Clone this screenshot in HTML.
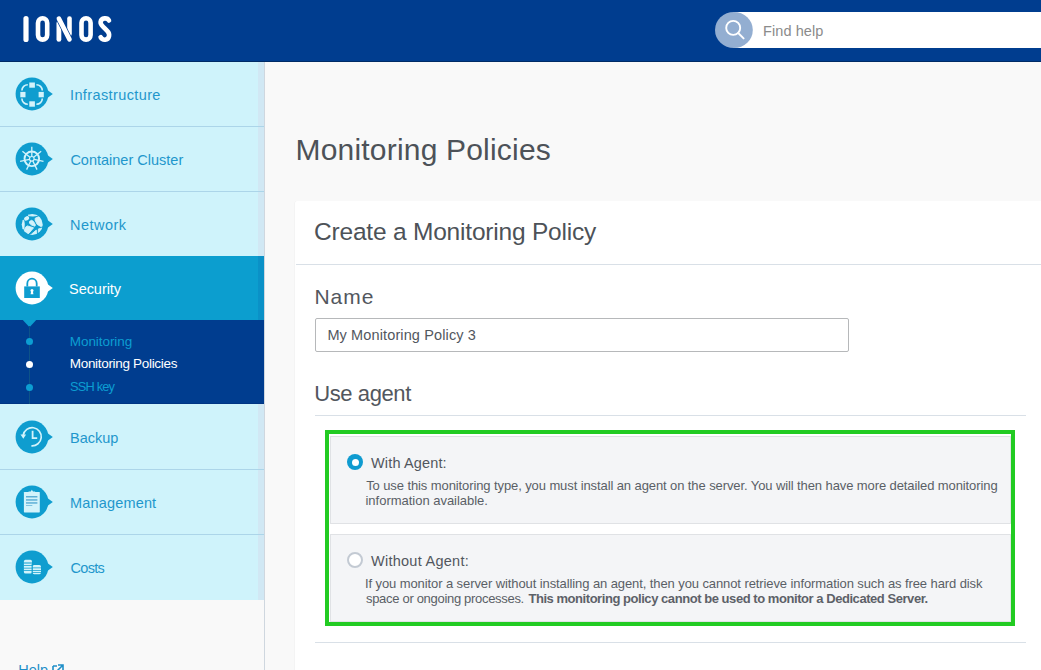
<!DOCTYPE html>
<html><head><meta charset="utf-8"><style>
*{margin:0;padding:0;box-sizing:border-box}
html,body{width:1041px;height:670px;overflow:hidden;background:#f9f9f9;font-family:"Liberation Sans",sans-serif}
.abs{position:absolute}
.t{position:absolute;white-space:nowrap}
.item{position:absolute;left:0;width:264px;background:#cff3fb}
.bb{position:absolute;left:0;width:264px;height:1px;background:#acd5e9}
.strip{position:absolute;left:258px;width:6px;background:#d1e8f4}
.ic{position:absolute;left:14px}
.hl{position:absolute;height:1px;background:#d9e0e7}
.panel{position:absolute;left:330px;width:681px;background:#f4f5f7;border:1px solid #e0e2e5}
</style></head><body>
<div class="abs" style="left:0;top:0;width:1041px;height:61px;background:#003d8f"></div>
<div class="abs" style="left:0;top:61px;width:1041px;height:1px;background:#002b66"></div>
<svg class="abs" style="left:20px;top:13px" width="96" height="32" viewBox="0 0 96 32">
  <g fill="none" stroke="#fff" stroke-linecap="round">
    <line x1="6" y1="5.6" x2="6" y2="26.4" stroke-width="5.2"/>
    <rect x="18" y="5.3" width="9.2" height="21.3" rx="4.6" stroke-width="4.6"/>
    <line x1="38.9" y1="10" x2="38.9" y2="26.4" stroke-width="4.8"/>
    <line x1="49.5" y1="5.6" x2="49.5" y2="21" stroke-width="4.6"/>
    <line x1="38.9" y1="5.6" x2="49.5" y2="26.4" stroke="#003d8f" stroke-width="6"/>
    <line x1="38.9" y1="5.6" x2="49.5" y2="26.4" stroke-width="4.6"/>
    <rect x="61.5" y="5.3" width="9.1" height="21.3" rx="4.55" stroke-width="4.6"/>
    <path d="M89 7.5 C87.5 4.5 81.2 4.4 80.6 9 C80.3 11.6 82 12.6 84.5 15.2 L87.4 18.2 C90.2 21 89.6 26.2 85.2 26.7 C82.8 26.9 81.4 25.7 80.6 24.2" stroke-width="4.6"/>
  </g>
</svg>
<div class="abs" style="left:733px;top:12px;width:308px;height:36px;background:#fff"></div>
<svg class="abs" style="left:715px;top:12px" width="38" height="36" viewBox="0 0 38 36"><ellipse cx="18.9" cy="18" rx="18.9" ry="18" fill="#93aed1"/><circle cx="18.2" cy="15.9" r="7" fill="none" stroke="#fff" stroke-width="1.9"/><line x1="23.2" y1="21" x2="28.6" y2="26.4" stroke="#fff" stroke-width="1.9" stroke-linecap="round"/></svg>

<div class="abs" style="left:264px;top:62px;width:1px;height:608px;background:#cfd7df"></div>
<div class="item" style="top:62px;height:194px"></div>
<div class="strip" style="top:62px;height:194px"></div>
<div class="bb" style="top:126px"></div>
<div class="bb" style="top:191px"></div>
<div class="abs" style="left:0;top:256px;width:258px;height:64px;background:#0c9ecf"></div>
<div class="abs" style="left:258px;top:256px;width:6px;height:64px;background:#0b91c7"></div>
<div class="abs" style="left:0;top:320px;width:264px;height:84px;background:#003d8f"></div>
<div class="abs" style="left:0;top:403px;width:264px;height:1px;background:#003583"></div>
<svg class="abs" style="left:22px;top:320px" width="15" height="9" viewBox="0 0 15 9"><path d="M0.8 0 L14.2 0 L7.5 7.2 Z" fill="#0c9ecf"/></svg>
<div class="abs" style="left:29px;top:326px;width:1px;height:78px;background:#0d5388"></div>
<div class="abs" style="left:25.9px;top:338.1px;width:7px;height:7px;border-radius:50%;background:#0c9ed2"></div>
<div class="abs" style="left:25.9px;top:361.1px;width:7px;height:7px;border-radius:50%;background:#fff"></div>
<div class="abs" style="left:25.9px;top:383.9px;width:7px;height:7px;border-radius:50%;background:#0c9ed2"></div>
<div class="item" style="top:404px;height:196px"></div>
<div class="strip" style="top:404px;height:196px"></div>
<div class="bb" style="top:469px"></div>
<div class="bb" style="top:534px"></div>
<svg class="ic" style="top:76px" width="40" height="36" viewBox="0 0 40 36"><circle cx="18" cy="18" r="16.4" fill="#0f9dcf"/><path d="M32.6 13.6 L38.8 18 L32.6 22.4 Z" fill="#0f9dcf"/>
   <g fill="none" stroke="#d3f3fb" stroke-width="1.6">
     <path d="M7.9 14.6 A5.9 5.9 0 0 1 13.8 8.7"/>
     <path d="M22.4 8.7 A5.9 5.9 0 0 1 28.3 14.6"/>
     <path d="M28.3 22.4 A5.9 5.9 0 0 1 22.4 28.3"/>
     <path d="M13.8 28.3 A5.9 5.9 0 0 1 7.9 22.4"/>
   </g>
   <g fill="#d3f3fb">
     <rect x="15.3" y="6.5" width="5.6" height="5.2"/>
     <rect x="6.3" y="15.9" width="5.2" height="5.4"/>
     <rect x="24.6" y="15.9" width="5.2" height="5.4"/>
     <rect x="15.3" y="25.3" width="5.6" height="5.4"/>
   </g></svg>
<svg class="ic" style="top:141px" width="40" height="36" viewBox="0 0 40 36"><circle cx="18" cy="18" r="16.4" fill="#0f9dcf"/><path d="M32.6 13.6 L38.8 18 L32.6 22.4 Z" fill="#0f9dcf"/>
   <circle cx="17.8" cy="17.8" r="7.3" fill="none" stroke="#d3f3fb" stroke-width="1.9"/>
   <g stroke="#d3f3fb" stroke-width="1.3">
<line x1="17.80" y1="15.40" x2="17.80" y2="5.80"/>
<line x1="19.68" y1="16.30" x2="27.18" y2="10.32"/>
<line x1="20.14" y1="18.33" x2="29.50" y2="20.47"/>
<line x1="18.84" y1="19.96" x2="23.01" y2="28.61"/>
<line x1="16.76" y1="19.96" x2="12.59" y2="28.61"/>
<line x1="15.46" y1="18.33" x2="6.10" y2="20.47"/>
<line x1="15.92" y1="16.30" x2="8.42" y2="10.32"/>
   </g>
   <circle cx="17.8" cy="17.8" r="2.3" fill="none" stroke="#d3f3fb" stroke-width="1.2"/>
   <rect x="16.9" y="16.9" width="1.8" height="1.8" fill="#0f9dcf"/></svg>
<svg class="ic" style="top:206px" width="40" height="36" viewBox="0 0 40 36"><circle cx="18" cy="18" r="16.4" fill="#0f9dcf"/><path d="M32.6 13.6 L38.8 18 L32.6 22.4 Z" fill="#0f9dcf"/>
   <clipPath id="gclip"><circle cx="18.2" cy="18.4" r="10.5"/></clipPath>
   <g clip-path="url(#gclip)" fill="#d3f3fb" stroke="#d3f3fb" stroke-width="0.9" stroke-linejoin="round">
     <path d="M13.5 6 L24 6 L23.6 9.4 L19 10.1 L14.6 9.7 Z"/>
     <ellipse cx="12.6" cy="12.3" rx="2.7" ry="2.1" transform="rotate(-25 12.6 12.3)" stroke="none"/>
     <path d="M21.2 12.2 L24.9 10.6 L30 12 L30 20 L26.6 20.4 L23.2 18.4 L21.1 14.2 Z"/>
     <path d="M15.5 15.4 L17.6 14.3 L19.5 15.4 L21.4 18.8 L21 20.2 L17.6 19.1 L15.5 17.3 Z"/>
     <path d="M6 13.4 L9.8 14.3 L10.3 18.2 L9.9 23 L6 23.4 Z"/>
     <path d="M11.5 21.2 L13.3 19.9 L19.6 21.8 L14.8 27.4 L8 30 Z"/>
     <path d="M17.2 28.4 L22.3 24.1 L22.6 30 L14 30 Z"/>
     <path d="M24.4 22.9 L30 21.6 L30 26 L24.3 27.4 Z"/>
   </g></svg>
<svg class="ic" style="top:270px" width="40" height="36" viewBox="0 0 40 36"><circle cx="18" cy="18" r="16.4" fill="#ffffff"/><path d="M32.6 13.6 L38.8 18 L32.6 22.4 Z" fill="#ffffff"/>
   <path d="M13.3 16.6 V13.4 A4.7 4.7 0 0 1 22.7 13.4 V16.6" fill="none" stroke="#0f9dcf" stroke-width="1.8"/>
   <rect x="10.2" y="16.4" width="15.6" height="11.6" fill="#0f9dcf"/>
   <circle cx="18" cy="20.4" r="1.5" fill="#fff"/><path d="M17.2 21 H18.8 L19.4 24.2 H16.6 Z" fill="#fff"/></svg>
<svg class="ic" style="top:419px" width="40" height="36" viewBox="0 0 40 36"><circle cx="18" cy="18" r="16.4" fill="#0f9dcf"/><path d="M32.6 13.6 L38.8 18 L32.6 22.4 Z" fill="#0f9dcf"/>
   <path d="M9.2 16.2 A9.1 9.1 0 1 1 17.4 26.8" fill="none" stroke="#d3f3fb" stroke-width="1.7"/>
   <path d="M6.5 15.4 L12.1 15.6 L9.3 19.8 Z" fill="#d3f3fb"/>
   <path d="M18.6 11.8 V19.2 H23.2" fill="none" stroke="#d3f3fb" stroke-width="1.8"/></svg>
<svg class="ic" style="top:484px" width="40" height="36" viewBox="0 0 40 36"><circle cx="18" cy="18" r="16.4" fill="#0f9dcf"/><path d="M32.6 13.6 L38.8 18 L32.6 22.4 Z" fill="#0f9dcf"/>
   <rect x="9.9" y="8" width="15.9" height="20.4" rx="0.6" fill="#d3f3fb"/>
   <path d="M13.8 9 H21.9 L21 7.4 H19 L17.85 5.8 L16.7 7.4 H14.7 Z" fill="#d3f3fb"/>
   <g fill="#5eafd6"><rect x="12" y="12" width="11.4" height="1.5"/><rect x="12" y="15.2" width="11.4" height="1.5"/><rect x="12" y="18.2" width="11.4" height="1.5"/><rect x="12" y="21.1" width="6.3" height="0.7"/></g></svg>
<svg class="ic" style="top:549px" width="40" height="36" viewBox="0 0 40 36"><circle cx="18" cy="18" r="16.4" fill="#0f9dcf"/><path d="M32.6 13.6 L38.8 18 L32.6 22.4 Z" fill="#0f9dcf"/>
   <rect x="9.9" y="10.8" width="8.1" height="13.8" rx="1.6" fill="#d3f3fb"/>
   <rect x="18.5" y="15.9" width="8.5" height="9.3" rx="1.6" fill="#d3f3fb"/>
   <g fill="#0f9dcf">
     <rect x="9.4" y="13.6" width="9" height="0.8" rx="0.4"/>
     <rect x="9.4" y="16.2" width="9" height="0.8" rx="0.4"/>
     <rect x="9.4" y="18.8" width="9" height="0.8" rx="0.4"/>
     <rect x="9.4" y="21.3" width="9" height="0.8" rx="0.4"/>
     <rect x="17.6" y="14.9" width="1" height="11" />
     <rect x="18" y="18.5" width="9.5" height="0.8" rx="0.4"/>
     <rect x="18" y="21" width="9.5" height="0.8" rx="0.4"/>
     <rect x="18" y="23.3" width="9.5" height="0.8" rx="0.4"/>
   </g></svg>
<div class="t" style="left:18.3px;top:661.6px;font-size:14.5px;line-height:16px;color:#1f8fc8">Help <svg width="12" height="12" viewBox="0 0 12 12" style="vertical-align:-1px"><path d="M1 2 H5 M1 2 V11 H10 V7" fill="none" stroke="#1f8fc8" stroke-width="1.6"/><path d="M6 1 H11 V6 M11 1 L5 7" fill="none" stroke="#1f8fc8" stroke-width="1.6"/></svg></div>

<div class="abs" style="left:295px;top:201px;width:760px;height:480px;background:#fff;border-radius:2px;box-shadow:-0.5px 0 0 #efefef"></div>
<div class="hl" style="left:296px;top:264px;width:745px"></div>
<div class="abs" style="left:315px;top:318px;width:534px;height:34px;border:1px solid #b6b8ba;border-radius:2px;background:#fff"></div>
<div class="hl" style="left:315px;top:415px;width:711px"></div>
<div class="panel" style="top:436px;height:88px"></div>
<div class="panel" style="top:534px;height:88px"></div>
<div class="abs" style="left:347.3px;top:454.1px;width:16px;height:16px;border-radius:50%;background:#0f9bd0"></div>
<div class="abs" style="left:351.8px;top:458.6px;width:7px;height:7px;border-radius:50%;background:#fff"></div>
<div class="abs" style="left:347.3px;top:552.1px;width:16px;height:16px;border-radius:50%;border:2px solid #c3cad3;background:#fff"></div>
<div class="abs" style="left:325px;top:430px;width:690px;height:196px;border:4px solid #22cb22"></div>
<div class="hl" style="left:315px;top:642px;width:711px"></div>
<div class="t" id="t_find" style="left:763.00px;top:24.13px;font-size:14.5px;line-height:14.5px;font-weight:400;letter-spacing:0.088px;color:#8b8b8b">Find help</div>
<div class="t" id="t_inf" style="left:70.00px;top:87.73px;font-size:14.5px;line-height:14.5px;font-weight:400;letter-spacing:0.385px;color:#1f97cc">Infrastructure</div>
<div class="t" id="t_cc" style="left:70.40px;top:152.83px;font-size:14.5px;line-height:14.5px;font-weight:400;letter-spacing:0.0px;color:#1f97cc">Container Cluster</div>
<div class="t" id="t_net" style="left:70.00px;top:217.73px;font-size:14.5px;line-height:14.5px;font-weight:400;letter-spacing:0.467px;color:#1f97cc">Network</div>
<div class="t" id="t_sec" style="left:69.00px;top:281.73px;font-size:14.5px;line-height:14.5px;font-weight:400;letter-spacing:-0.043px;color:#ffffff">Security</div>
<div class="t" id="t_mon" style="left:69.80px;top:334.77px;font-size:13.5px;line-height:13.5px;font-weight:400;letter-spacing:-0.067px;color:#0c9ed2">Monitoring</div>
<div class="t" id="t_monp" style="left:69.80px;top:356.57px;font-size:13.5px;line-height:13.5px;font-weight:400;letter-spacing:-0.317px;color:#ffffff">Monitoring Policies</div>
<div class="t" id="t_ssh" style="left:70.10px;top:380.96px;font-size:12.8px;line-height:12.8px;font-weight:400;letter-spacing:-0.833px;color:#0c9ed2">SSH key</div>
<div class="t" id="t_bak" style="left:70.00px;top:430.73px;font-size:14.5px;line-height:14.5px;font-weight:400;letter-spacing:0.0px;color:#1f97cc">Backup</div>
<div class="t" id="t_mgmt" style="left:70.00px;top:495.73px;font-size:14.5px;line-height:14.5px;font-weight:400;letter-spacing:0.167px;color:#1f97cc">Management</div>
<div class="t" id="t_cost" style="left:70.40px;top:560.73px;font-size:14.5px;line-height:14.5px;font-weight:400;letter-spacing:-0.65px;color:#1f97cc">Costs</div>
<div class="t" id="t_title" style="left:295.50px;top:134.60px;font-size:30px;line-height:30px;font-weight:400;letter-spacing:0.194px;color:#4d5258">Monitoring Policies</div>
<div class="t" id="t_ctitle" style="left:314.00px;top:220.06px;font-size:24.5px;line-height:24.5px;font-weight:400;letter-spacing:-0.2px;color:#4d5258">Create a Monitoring Policy</div>
<div class="t" id="t_name" style="left:314.40px;top:286.22px;font-size:21px;line-height:21px;font-weight:400;letter-spacing:1.033px;color:#52575e">Name</div>
<div class="t" id="t_input" style="left:327.40px;top:327.93px;font-size:14.5px;line-height:14.5px;font-weight:400;letter-spacing:0.124px;color:#52575e">My Monitoring Policy 3</div>
<div class="t" id="t_agent" style="left:314.20px;top:383.18px;font-size:22px;line-height:22px;font-weight:400;letter-spacing:-0.4px;color:#52575e">Use agent</div>
<div class="t" id="t_with" style="left:371.00px;top:455.63px;font-size:14.5px;line-height:14.5px;font-weight:400;letter-spacing:0.15px;color:#52575e">With Agent:</div>
<div class="t" id="t_d1a" style="left:366.20px;top:478.90px;font-size:13px;line-height:13px;font-weight:400;letter-spacing:-0.098px;color:#5a5f66">To use this monitoring type, you must install an agent on the server. You will then have more detailed monitoring</div>
<div class="t" id="t_d1b" style="left:365.50px;top:493.50px;font-size:13px;line-height:13px;font-weight:400;letter-spacing:-0.019px;color:#5a5f66">information available.</div>
<div class="t" id="t_without" style="left:371.00px;top:553.53px;font-size:14.5px;line-height:14.5px;font-weight:400;letter-spacing:0.262px;color:#52575e">Without Agent:</div>
<div class="t" id="t_d2a" style="left:365.00px;top:576.80px;font-size:13px;line-height:13px;font-weight:400;letter-spacing:-0.094px;color:#5a5f66">If you monitor a server without installing an agent, then you cannot retrieve information such as free hard disk</div>
<div class="t" id="t_d2b" style="left:366.00px;top:591.70px;font-size:13px;line-height:13px;font-weight:400;letter-spacing:-0.308px;color:#5a5f66">space or ongoing processes.</div>
<div class="t" id="t_d2c" style="left:528.40px;top:591.70px;font-size:13px;line-height:13px;font-weight:700;letter-spacing:-0.448px;color:#5d6168">This monitoring policy cannot be used to monitor a Dedicated Server.</div>
</body></html>
